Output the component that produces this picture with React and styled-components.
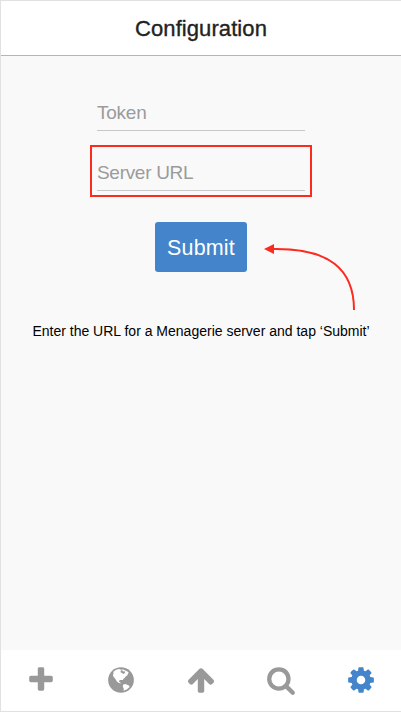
import React from 'react';
import styled, { createGlobalStyle } from 'styled-components';

const GlobalStyle = createGlobalStyle`
  *, *::before, *::after { box-sizing: border-box; }
  body {
    margin: 0;
    font-family: "Liberation Sans", Arial, sans-serif;
    background: #f9f9f9;
  }
`;

const Screen = styled.div`
  display: flex;
  flex-direction: column;
  width: 401px;
  height: 712px;
  border: solid #e1e1e1;
  border-width: 1px 0 1px 1px;
  background: #f9f9f9;
`;

const Header = styled.header`
  display: flex;
  align-items: center;
  justify-content: center;
  height: 55px;
  padding-top: 2px;
  background: #fff;
  border-bottom: 1px solid #b5b5b5;
`;

const Title = styled.h1`
  margin: 0;
  font-size: 22px;
  font-weight: 400;
  line-height: 26px;
  letter-spacing: 0.08px;
  color: #222;
  -webkit-text-stroke: 0.35px #222;
`;

const Content = styled.main`
  flex: 1;
  display: flex;
  flex-direction: column;
  align-items: center;
  padding-top: 29px;
`;

const Field = styled.div`
  display: flex;
  flex-direction: column;
  justify-content: center;
  width: 222px;
  height: 52px;
  padding: 0 5px;
  border: 2px solid ${(p) => (p.$highlighted ? '#fb2b20' : 'transparent')};
  margin-bottom: ${(p) => (p.$highlighted ? '25px' : '8px')};
`;

const Input = styled.input`
  width: 208px;
  height: 38px;
  margin-top: 2px;
  padding: 3px 0 0;
  border: 0;
  border-bottom: 1px solid #c8c8c8;
  border-radius: 0;
  outline: 0;
  background: transparent;
  font: 19px "Liberation Sans", Arial, sans-serif;
  letter-spacing: ${(p) => p.$tracking};
  color: #333;
  &::placeholder { color: #9b9b9b; opacity: 1; }
`;

const SubmitButton = styled.button`
  position: relative;
  width: 92px;
  height: 50px;
  margin-right: 1px;
  padding: 2px 0 0 1px;
  border: 0;
  border-radius: 3px;
  background: #4484ca;
  color: #fff;
  font: 21.5px "Liberation Sans", Arial, sans-serif;
  letter-spacing: 0.15px;
`;

const Arrow = styled.svg`
  position: absolute;
  left: 109px;
  top: 20px;
  width: 94px;
  height: 70px;
  overflow: visible;
`;

const Hint = styled.p`
  margin: 51px 0 0;
  font-size: 14px;
  line-height: 16px;
  color: #000;
  white-space: nowrap;
`;

const TabBar = styled.nav`
  display: grid;
  grid-template-columns: repeat(5, 80px);
  height: 61px;
  background: #fff;
`;

const Tab = styled.button`
  display: flex;
  align-items: center;
  justify-content: center;
  padding: 0 0 2px;
  border: 0;
  background: transparent;
  color: ${(p) => (p.$active ? '#4484ca' : '#999')};
`;

const Glyph = styled.svg`
  width: 30px;
  height: 30px;
  fill: currentColor;
`;

const GlyphLand = styled.path`
  fill: #fff;
`;

const tabs = [
  {
    label: 'Add',
    path: 'M1600 736v192q0 40-28 68t-68 28h-416v416q0 40-28 68t-68 28h-192q-40 0-68-28t-28-68v-416h-416q-40 0-68-28t-28-68v-192q0-40 28-68t68-28h416v-416q0-40 28-68t68-28h192q40 0 68 28t28 68v416h416q40 0 68 28t28 68z',
  },
  {
    label: 'Browse',
    path: 'M896 128a768 768 0 1 0 0 1536a768 768 0 1 0 0-1536z',
    land: 'M440 400L600 290L780 245L900 290L1040 265L1180 350L1310 400L1350 470L1320 520L1250 640L1170 690L1110 770L1030 840L1010 900L940 890L820 890L780 960L820 1040L890 1060L870 1100L740 1060L640 970L580 860L510 780L440 690L415 590L450 490ZM1030 1170L1160 1130L1260 1180L1390 1240L1410 1310L1260 1450L1050 1540L1060 1400L1000 1290Z',
    sea: 'M880 330L960 310L1030 390L1130 370L1140 470L1050 540L950 480L870 430Z',
  },
  {
    label: 'Upload',
    path: 'M1675 971q0 51-37 90l-75 75q-38 38-91 38-54 0-90-38l-294-293v704q0 52-37.5 84.5t-90.5 32.5h-128q-53 0-90.5-32.5t-37.5-84.5v-704l-294 293q-36 38-90 38t-90-38l-75-75q-38-38-38-90 0-53 38-91l651-651q35-37 90-37 54 0 91 37l651 651q37 39 37 91z',
  },
  {
    label: 'Search',
    path: 'M1216 832q0-185-131.5-316.5t-316.5-131.5-316.5 131.5-131.5 316.5 131.5 316.5 316.5 131.5 316.5-131.5 131.5-316.5zm512 832q0 52-38 90t-90 38q-54 0-90-38l-343-342q-179 124-399 124-143 0-273.5-55.5t-225-150-150-225-55.5-273.5 55.5-273.5 150-225 225-150 273.5-55.5 273.5 55.5 225 150 150 225 55.5 273.5q0 220-124 399l343 343q37 37 37 90z',
  },
  {
    label: 'Settings',
    active: true,
    path: 'M1152 896q0-106-75-181t-181-75-181 75-75 181 75 181 181 75 181-75 75-181zm512-109v222q0 12-8 23t-20 13l-185 28q-19 54-39 91 35 50 107 138 10 12 10 25t-9 23q-27 37-99 108t-94 71q-12 0-26-9l-138-108q-44 23-91 38-16 136-29 186-7 28-36 28h-222q-14 0-24.5-8.5t-11.5-21.5l-28-184q-49-16-90-37l-141 107q-10 9-25 9-14 0-25-11-126-114-165-168-7-10-7-23 0-12 8-23 15-21 51-66.5t54-70.5q-27-50-41-99l-183-27q-13-2-21-12.5t-8-23.5v-222q0-12 8-23t19-13l186-28q14-46 39-92-40-57-107-138-10-12-10-24 0-10 9-23 26-36 98.5-107.5t94.5-71.5q13 0 26 10l138 107q44-23 91-38 16-136 29-186 7-28 36-28h222q14 0 24.5 8.5t11.5 21.5l28 184q49 16 90 37l142-107q9-9 24-9 13 0 25 10 129 119 165 170 7 8 7 22 0 12-8 23-15 21-51 66.5t-54 70.5q26 50 41 98l183 28q13 2 21 12.5t8 23.5z',
  },
];

export default function App() {
  return (
    <>
      <GlobalStyle />
      <Screen>
        <Header>
          <Title>Configuration</Title>
        </Header>
        <Content>
          <Field>
            <Input placeholder="Token" $tracking="-0.25px" />
          </Field>
          <Field $highlighted>
            <Input placeholder="Server URL" $tracking="-0.3px" />
          </Field>
          <SubmitButton type="button">
            Submit
            <Arrow viewBox="0 0 94 70">
              <path d="M9 7C65 6 90 27 90 68" fill="none" stroke="#fb2b20" strokeWidth="2" />
              <path d="M0 7L10 2V12Z" fill="#fb2b20" />
            </Arrow>
          </SubmitButton>
          <Hint>Enter the URL for a Menagerie server and tap ‘Submit’</Hint>
        </Content>
        <TabBar>
          {tabs.map((tab) => (
            <Tab key={tab.label} type="button" aria-label={tab.label} $active={tab.active}>
              <Glyph viewBox="0 0 1792 1792">
                <path d={tab.path} />
                {tab.land && <GlyphLand d={tab.land} />}
                {tab.sea && <path d={tab.sea} />}
              </Glyph>
            </Tab>
          ))}
        </TabBar>
      </Screen>
    </>
  );
}
